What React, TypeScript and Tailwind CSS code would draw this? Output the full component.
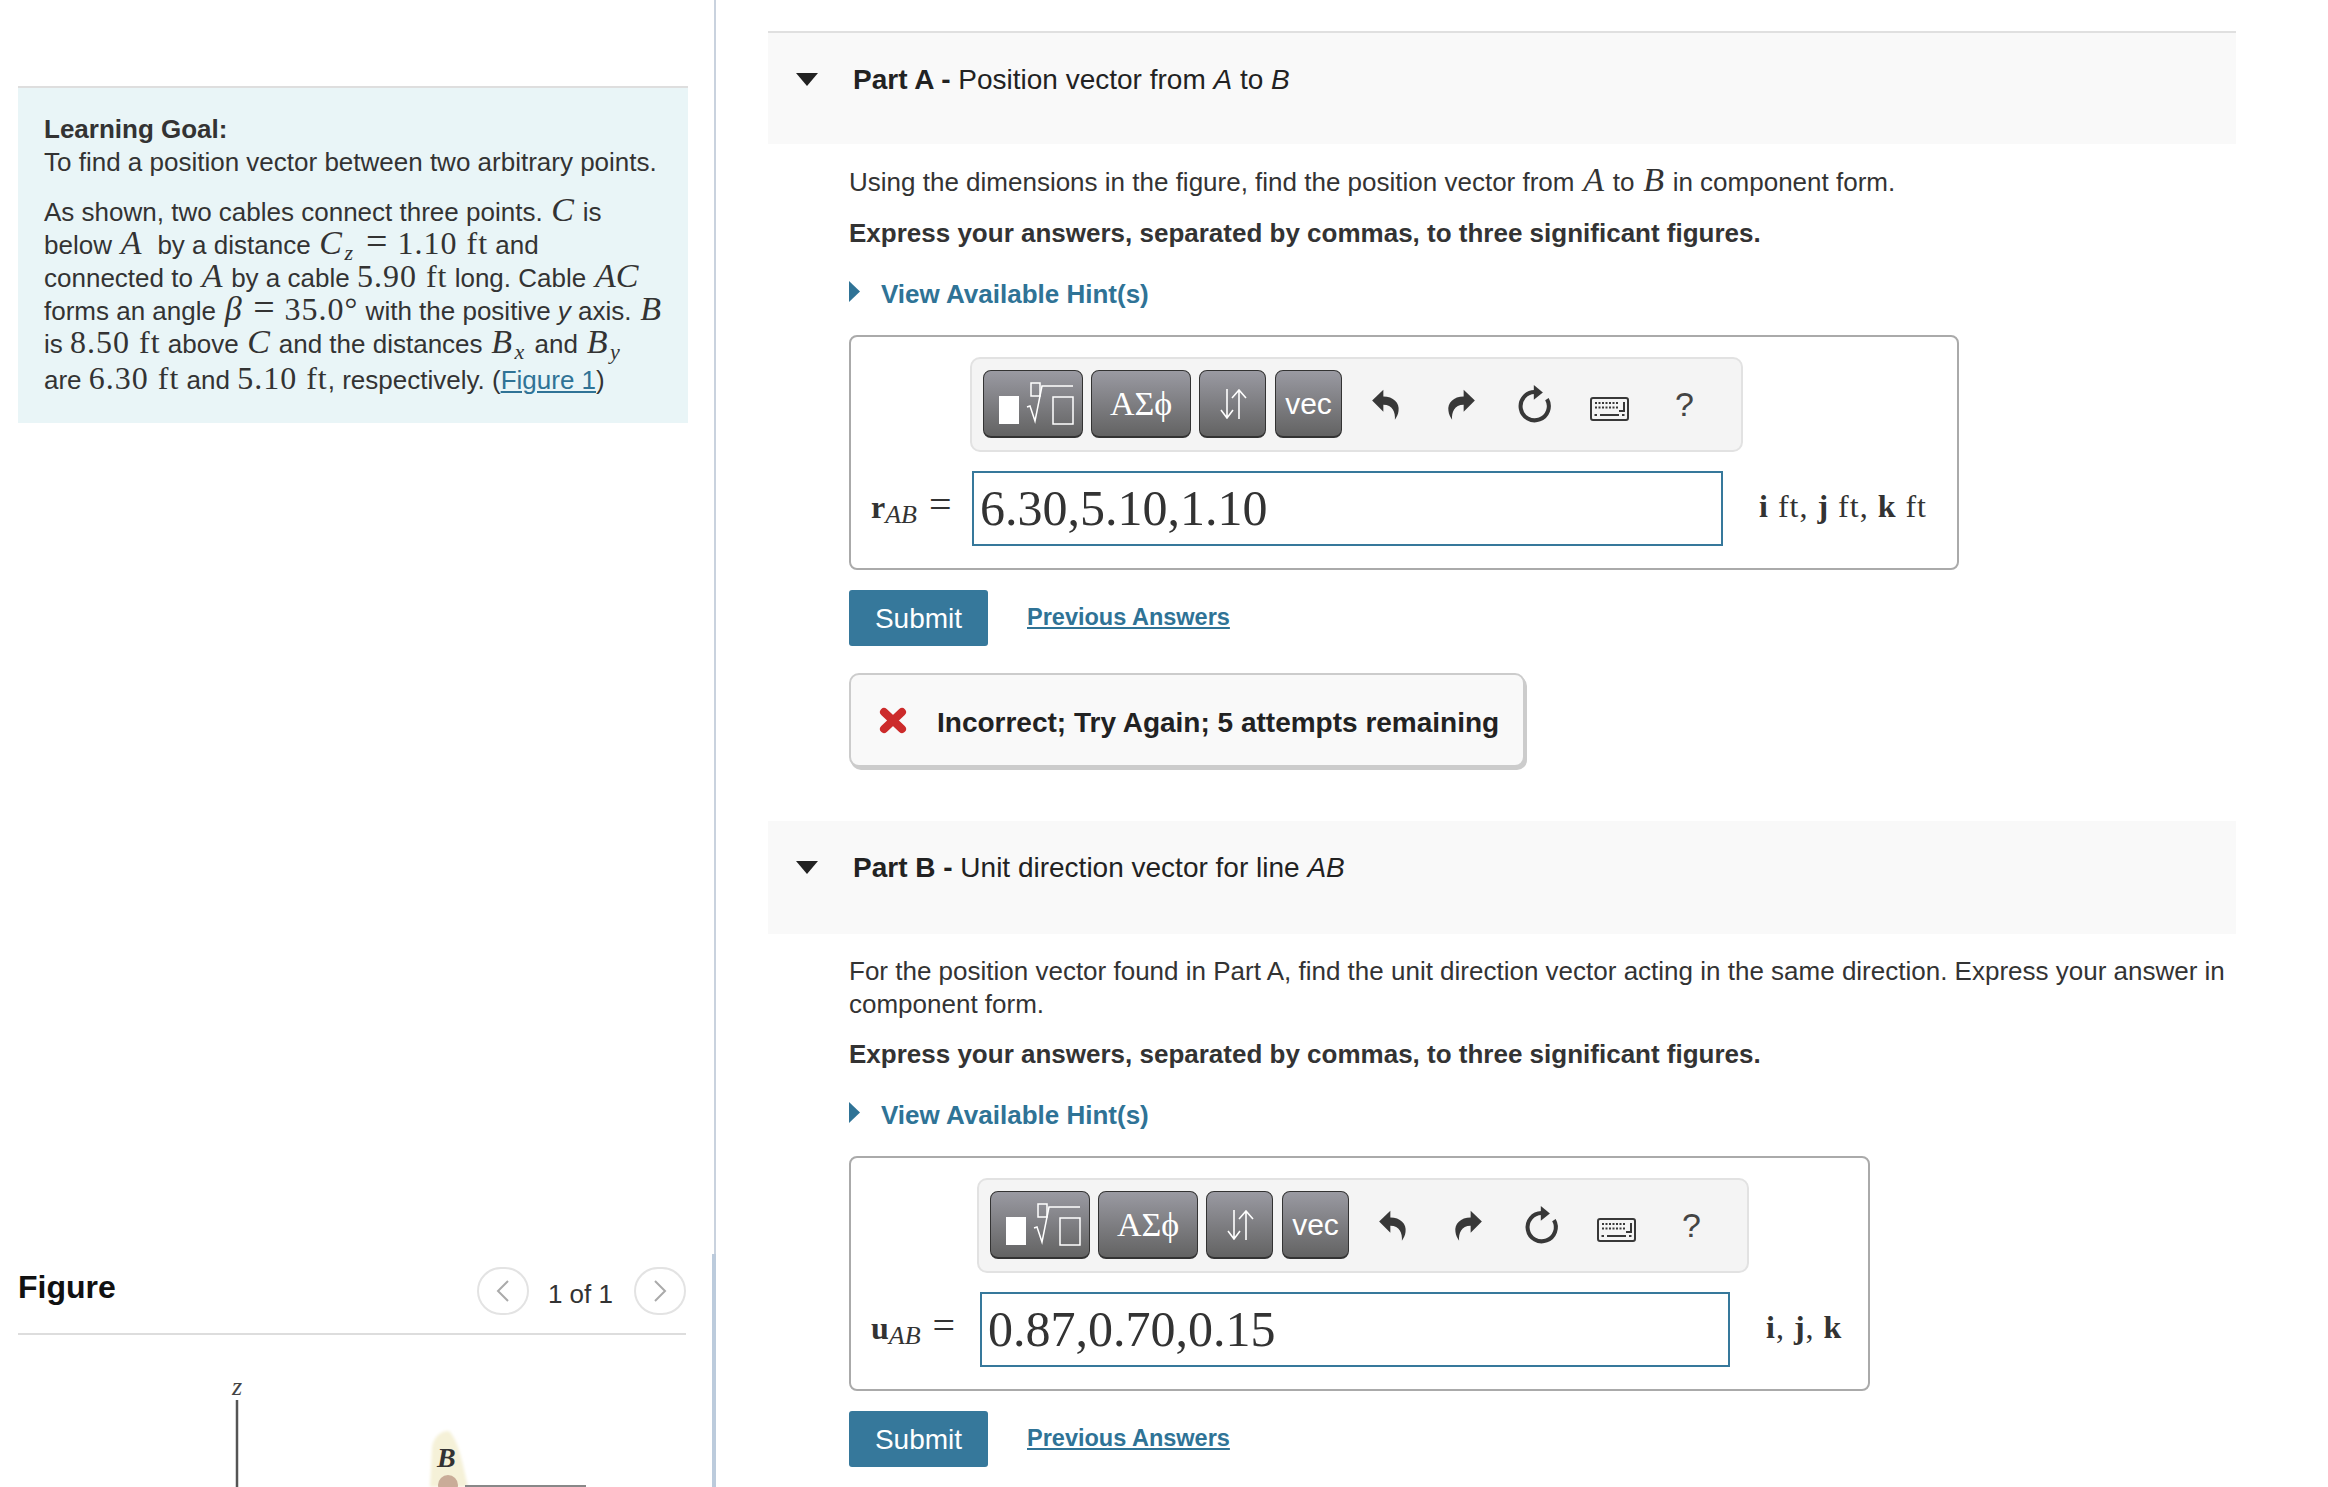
import React from "react";

const M: React.FC<{ children: React.ReactNode }> = ({ children }) => (
  <span className="mx-[1.500px] font-['Liberation_Serif',serif] text-[34px] italic leading-[0]">{children}</span>
);

const N: React.FC<{ children: React.ReactNode }> = ({ children }) => (
  <span className="font-['Liberation_Serif',serif] text-[32px] leading-[0] tracking-[1px]">{children}</span>
);

const Eq: React.FC = () => (
  <span className="mx-[10px] font-['Liberation_Serif',serif] text-[38px] leading-[0]">=</span>
);

const Sub: React.FC<{ children: React.ReactNode }> = ({ children }) => (
  <sub className="ml-[1px] mr-[3px] font-['Liberation_Serif',serif] text-[22px] italic">{children}</sub>
);

const ToolButton: React.FC<{ className: string; children: React.ReactNode }> = ({ className, children }) => (
  <div
    className={`flex h-[68px] items-center justify-center rounded-[8px] border border-b-2 border-[#333] bg-gradient-to-b from-[#9a9aa2] to-[#636363] text-white ${className}`}
  >
    {children}
  </div>
);

const UndoIcon: React.FC<{ className?: string }> = ({ className }) => (
  <svg className={className} width="30" height="33" viewBox="60 50 90 100">
    <path d="M66 88L100 55V76C130 76 150 95 146 120C145 130 140 140 135 146C137 125 128 101 100 101V122Z" fill="#383838" />
  </svg>
);

const Toolbar: React.FC<{ className: string }> = ({ className }) => (
  <div className={`flex h-[95px] items-start rounded-[10px] border-2 border-[#e2e2e2] bg-[#f4f4f4] pl-[11px] pt-[11px] ${className}`}>
    <ToolButton className="w-[100px]">
      <svg width="98" height="65" viewBox="0 0 98 65" fill="none" stroke="white" strokeWidth="1.5">
        <rect x="15" y="25" width="20" height="28" fill="white" stroke="none" />
        <rect x="47" y="12" width="9" height="13" />
        <path d="M43 36l3-1 5 15 7-35h31" />
        <rect x="69" y="26" width="20" height="27" />
      </svg>
    </ToolButton>
    <ToolButton className="ml-[8px] w-[100px] font-['Liberation_Serif',serif] text-[34px]">ΑΣϕ</ToolButton>
    <ToolButton className="ml-[8px] w-[67px]">
      <svg width="30" height="30" viewBox="0 0 30 30" fill="none" stroke="white" strokeWidth="1.6">
        <path d="M9 0v28M3 21l6 8 6-8" />
        <path d="M21 30V2M14 9l7-8 7 8" />
      </svg>
    </ToolButton>
    <ToolButton className="ml-[9px] w-[67px] text-[30px]">vec</ToolButton>
    <div className="ml-[5px] flex h-[68px] items-center text-[#383838]">
      <div className="flex w-[75px] justify-center">
        <UndoIcon />
      </div>
      <div className="flex w-[75px] justify-center pl-[5px]">
        <UndoIcon className="-scale-x-100" />
      </div>
      <div className="flex w-[75px] justify-center">
        <svg width="37" height="42" viewBox="500 40 110 125" fill="none">
          <path d="M555 67A42 42 0 1 0 592 88" stroke="#383838" strokeWidth="12" />
          <path d="M553 46L580 68L553 90Z" fill="#383838" />
        </svg>
      </div>
      <div className="mt-[10px] flex w-[75px] justify-center">
        <svg width="39" height="24" viewBox="0 0 39 24" fill="none">
          <rect x="1" y="1" width="37" height="22" rx="2" stroke="#383838" strokeWidth="2" />
          <path d="M5 6h24M5 10.500h24" stroke="#383838" strokeWidth="2" strokeDasharray="2 1.500" />
          <path d="M34 5v9h-5" stroke="#383838" strokeWidth="2" />
          <path d="M10 18h19M4.500 18h2.500M32 18h2.500" stroke="#383838" strokeWidth="2" />
        </svg>
      </div>
      <div className="flex w-[75px] justify-center text-[34px] text-[#444]">?</div>
    </div>
  </div>
);

const AnswerBox: React.FC<{
  className: string;
  toolbarClass: string;
  labelClass: string;
  inputClass: string;
  symbol: string;
  value: string;
  children: React.ReactNode;
}> = ({ className, toolbarClass, labelClass, inputClass, symbol, value, children }) => (
  <div className={`mt-[24px] h-[235px] rounded-[8px] border-2 border-[#aaa] pt-[20px] ${className}`}>
    <Toolbar className={toolbarClass} />
    <div className="mt-[19px] flex items-center pl-[20px]">
      <div className={`-translate-y-[2px] whitespace-nowrap font-['Liberation_Serif',serif] text-[32px] leading-none text-[#333] ${labelClass}`}>
        <b>{symbol}</b>
        <i className="align-[-5px] text-[26px]">AB</i>
        <span className="ml-[12px] text-[40px]">=</span>
      </div>
      <div className={`flex h-[75px] items-center border-2 border-[#36789b] pl-[6px] font-['Liberation_Serif',serif] text-[50px] text-[#333] ${inputClass}`}>
        {value}
      </div>
      <div className="ml-[36px] -translate-y-[2px] font-['Liberation_Serif',serif] text-[32px] tracking-[1px] text-[#333]">{children}</div>
    </div>
  </div>
);

const SubmitRow: React.FC = () => (
  <div className="mt-[20px] flex items-center">
    <button className="h-[56px] w-[139px] rounded-[3px] bg-[#36789b] text-[28px] text-white">Submit</button>
    <a className="ml-[39px] -translate-y-[1px] text-[23.500px] font-bold text-[#2f7396] underline">Previous Answers</a>
  </div>
);

const PartHeader: React.FC<{ className: string; children: React.ReactNode }> = ({ className, children }) => (
  <div className={`flex h-[113px] items-start bg-[#f9f9f9] pl-[28px] pt-[30px] ${className}`}>
    <svg className="mt-[10px]" width="22" height="13" viewBox="0 0 22 13">
      <path d="M0 0h22l-11 13z" fill="#222" />
    </svg>
    <div className="ml-[35px] text-[28px] text-[#222]">{children}</div>
  </div>
);

const HintRow: React.FC = () => (
  <div className="mt-[28px] flex items-start">
    <svg className="mt-[3px]" width="11" height="21" viewBox="0 0 11 21">
      <path d="M0 0l11 10.500L0 21z" fill="#2f7396" />
    </svg>
    <span className="ml-[21px] font-bold text-[#2f7396]">View Available Hint(s)</span>
  </div>
);

const Pager: React.FC<{ d: string }> = ({ d }) => (
  <div className="flex h-[48px] w-[52px] items-center justify-center rounded-full border-2 border-[#e3e3e3]">
    <svg width="14" height="22" viewBox="0 0 14 22" fill="none">
      <path d={d} stroke="#aaa" strokeWidth="2" />
    </svg>
  </div>
);

export default function App() {
  return (
    <div className="flex h-[1487px] overflow-hidden bg-white font-['Liberation_Sans',sans-serif] text-[26px] leading-[33px] text-[#333]">
      {/* left panel */}
      <div className="relative h-full w-[716px] shrink-0 border-r-2 border-[#c9d2de] pl-[18px] pt-[86px]">
        <div className="w-[670px] border-t-2 border-[#dedede] bg-[#e9f5f7] px-[26px] pb-[26px] pt-[25px]">
          <p>
            <b>Learning Goal:</b>
            <br />
            To find a position vector between two arbitrary points.
          </p>
          <p className="mt-[17px] whitespace-nowrap">
            As shown, two cables connect three points. <M>C</M> is
            <br />
            below <M>A</M> &nbsp;by a distance <M>C</M>
            <Sub>z</Sub>
            <Eq />
            <N>1.10 ft</N> and
            <br />
            connected to <M>A</M> by a cable <N>5.90 ft</N> long. Cable <M>AC</M>
            <br />
            forms an angle <M>β</M>
            <Eq />
            <N>35.0°</N> with the positive <i>y</i> axis. <M>B</M>
            <br />
            is <N>8.50 ft</N> above <M>C</M> and the distances <M>B</M>
            <Sub>x</Sub> and <M>B</M>
            <Sub>y</Sub>
            <span className="mt-[3px] block">
              are <N>6.30 ft</N> and <N>5.10 ft</N>, respectively. (<a className="text-[#2f7396] underline">Figure 1</a>)
            </span>
          </p>
        </div>

        <div className="mt-[844px] flex h-[68px] w-[668px] items-start border-b-2 border-[#ddd]">
          <h2 className="mt-[4px] flex-1 text-[32px] font-bold text-[#111]">Figure</h2>
          <Pager d="M12 1L2 11l10 10" />
          <span className="ml-[19px] mr-[21px] mt-[11px] text-[#333]">1 of 1</span>
          <Pager d="M2 1l10 10L2 21" />
        </div>

        <svg className="block" width="680" height="152" viewBox="0 0 680 152">
          <defs>
            <filter id="soft">
              <feGaussianBlur stdDeviation="1.500" />
            </filter>
          </defs>
          <text x="214" y="60" fontSize="26" fontStyle="italic" fontFamily="Liberation Serif" fill="#444">
            z
          </text>
          <path d="M219 65V152" stroke="#555" strokeWidth="2.500" />
          <path d="M414 112C416 100 425 95 431 96C440 105 444 125 450 152H412Z" fill="#f5f1d8" filter="url(#soft)" />
          <text x="419" y="132" fontSize="28" fontWeight="bold" fontStyle="italic" fontFamily="Liberation Serif" fill="#333">
            B
          </text>
          <circle cx="430" cy="150" r="10" fill="#c9ac98" />
          <path d="M447 151H568" stroke="#888" strokeWidth="2" />
        </svg>
        <div className="absolute bottom-0 right-[-2px] top-[1254px] w-[4px] bg-[#bccbdc]" />
      </div>

      {/* right panel */}
      <div className="w-[1520px] shrink-0 pl-[52px] pt-[31px]">
        <PartHeader className="border-t-2 border-[#e0e0e0]">
          <b>Part A - </b>Position vector from <i>A</i> to <i>B</i>
        </PartHeader>
        <div className="pl-[81px] pr-[12px] pt-[22px]">
          <p>
            Using the dimensions in the figure, find the position vector from <M>A</M> to <M>B</M> in component form.
          </p>
          <p className="mt-[18px] font-bold">Express your answers, separated by commas, to three significant figures.</p>
          <HintRow />
          <AnswerBox
            className="w-[1110px]"
            toolbarClass="ml-[119px] w-[773px]"
            labelClass="w-[101px]"
            inputClass="w-[751px]"
            symbol="r"
            value="6.30,5.10,1.10"
          >
            <b>i</b> ft, <b>j</b> ft, <b>k</b> ft
          </AnswerBox>
          <SubmitRow />
          <div className="mt-[27px] flex h-[94px] w-[676px] items-center rounded-[10px] border-2 border-[#ccc] bg-[#f9f9f9] pl-[28px] shadow-[2px_3px_0_#ccc]">
            <svg width="28" height="27" viewBox="0 0 28 27">
              <path d="M5 5L23 22M23 5L5 22" stroke="#cc2b2b" strokeWidth="8" strokeLinecap="round" />
            </svg>
            <b className="ml-[30px] mt-[4px] text-[28px] text-[#222]">Incorrect; Try Again; 5 attempts remaining</b>
          </div>
        </div>

        <PartHeader className="mt-[54px]">
          <b>Part B - </b>Unit direction vector for line <i>AB</i>
        </PartHeader>
        <div className="pl-[81px] pr-[4px] pt-[21px]">
          <p>
            For the position vector found in Part A, find the unit direction vector acting in the same direction. Express your answer in component form.
          </p>
          <p className="mt-[17px] font-bold">Express your answers, separated by commas, to three significant figures.</p>
          <HintRow />
          <AnswerBox
            className="w-[1021px]"
            toolbarClass="ml-[126px] w-[772px]"
            labelClass="w-[109px]"
            inputClass="w-[750px]"
            symbol="u"
            value="0.87,0.70,0.15"
          >
            <b>i</b>, <b>j</b>, <b>k</b>
          </AnswerBox>
          <SubmitRow />
        </div>
      </div>
    </div>
  );
}
